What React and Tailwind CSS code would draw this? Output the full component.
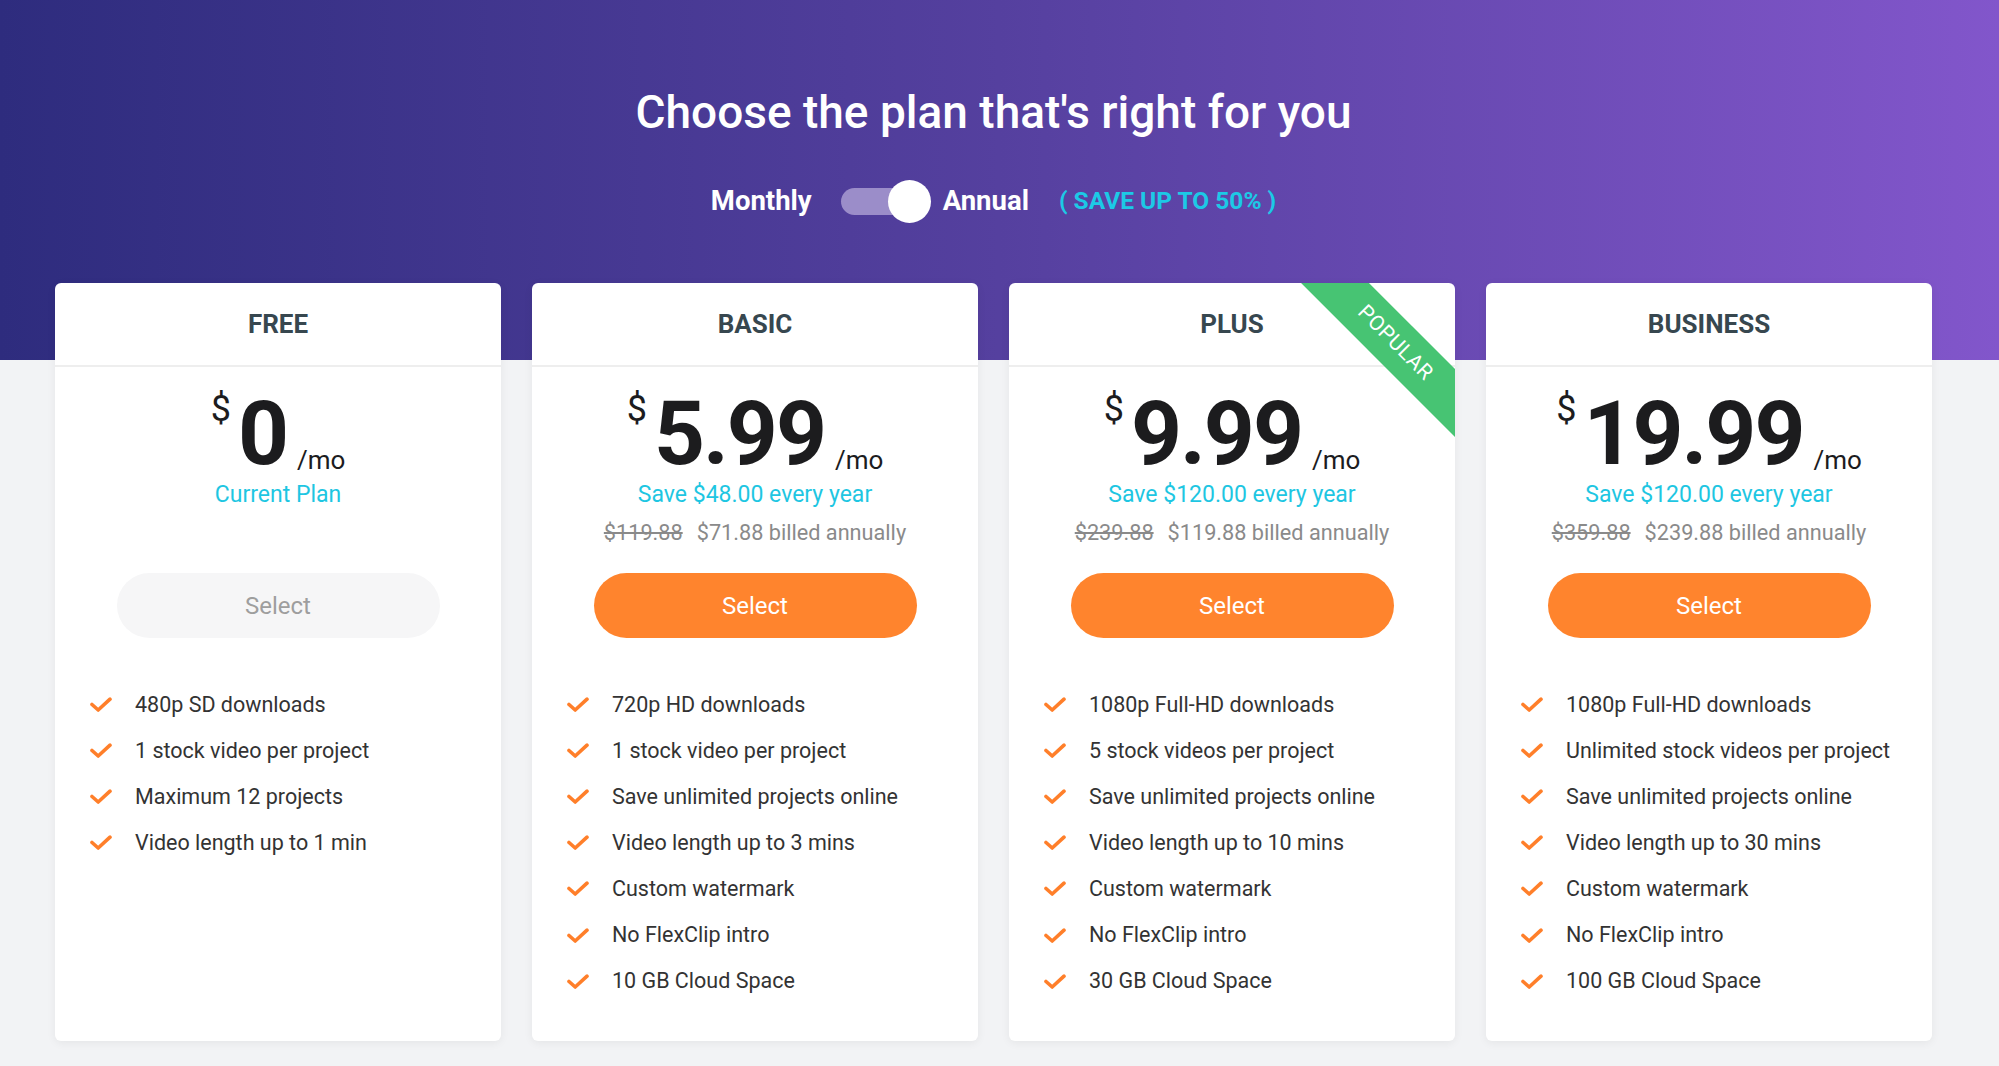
import React from "react";

const plans = [
  {
    name: "FREE",
    price: "0",
    sub: "Current Plan",
    old: null,
    billed: null,
    current: true,
    features: [
      "480p SD downloads",
      "1 stock video per project",
      "Maximum 12 projects",
      "Video length up to 1 min",
    ],
  },
  {
    name: "BASIC",
    price: "5.99",
    sub: "Save $48.00 every year",
    old: "$119.88",
    billed: "$71.88 billed annually",
    features: [
      "720p HD downloads",
      "1 stock video per project",
      "Save unlimited projects online",
      "Video length up to 3 mins",
      "Custom watermark",
      "No FlexClip intro",
      "10 GB Cloud Space",
    ],
  },
  {
    name: "PLUS",
    price: "9.99",
    sub: "Save $120.00 every year",
    old: "$239.88",
    billed: "$119.88 billed annually",
    popular: true,
    features: [
      "1080p Full-HD downloads",
      "5 stock videos per project",
      "Save unlimited projects online",
      "Video length up to 10 mins",
      "Custom watermark",
      "No FlexClip intro",
      "30 GB Cloud Space",
    ],
  },
  {
    name: "BUSINESS",
    price: "19.99",
    sub: "Save $120.00 every year",
    old: "$359.88",
    billed: "$239.88 billed annually",
    features: [
      "1080p Full-HD downloads",
      "Unlimited stock videos per project",
      "Save unlimited projects online",
      "Video length up to 30 mins",
      "Custom watermark",
      "No FlexClip intro",
      "100 GB Cloud Space",
    ],
  },
];

function Check() {
  return (
    <svg width="22" height="16" viewBox="0 0 22 16" className="shrink-0">
      <path
        d="M2 7.5 L8.2 13 L20 2.2"
        fill="none"
        stroke="#ff7f2a"
        strokeWidth="3.6"
        strokeLinecap="round"
        strokeLinejoin="round"
      />
    </svg>
  );
}

function Card({ plan }) {
  return (
    <div className="relative overflow-hidden rounded-[6px] bg-white shadow-[0_2px_10px_rgba(0,0,0,0.06)]">
      {plan.popular && (
        <div className="absolute left-[251px] top-[36px] flex h-[48px] w-[270px] rotate-45 items-center justify-center bg-[#47c473] text-[21px] tracking-[0.5px] text-white">
          POPULAR
        </div>
      )}
      <div className="flex h-[84px] items-center justify-center border-b-2 border-[#eeeeee] text-[26px] font-bold text-[#37474f]">
        {plan.name}
      </div>
      <div className="flex flex-col items-center pt-[22px]">
        <div className="flex h-[90px] items-baseline justify-center text-[#1c1c1e]">
          <span className="mr-[7px] self-start pt-[2px] text-[36px] leading-none">$</span>
          <span className="text-[89px] font-bold leading-none tracking-[-2px]">{plan.price}</span>
          <span className="ml-[10px] translate-y-[5px] text-[26px] leading-none">/mo</span>
        </div>
        <div className="h-[32px] text-[23px] leading-[32px] text-[#1ec6e2]">{plan.sub}</div>
        <div className="mt-[7px] h-[30px] text-[21.7px] leading-[30px] text-[#8a8a8a]">
          {plan.old && (
            <>
              <span className="line-through">{plan.old}</span>
              <span className="ml-[14px]">{plan.billed}</span>
            </>
          )}
        </div>
        <button
          className={
            plan.current
              ? "mt-[25px] h-[65px] w-[323px] rounded-full bg-[#f6f6f7] text-[24px] text-[#9e9e9e]"
              : "mt-[25px] h-[65px] w-[323px] rounded-full bg-[#ff842d] text-[24px] text-white"
          }
        >
          Select
        </button>
      </div>
      <ul className="pb-[36px] pl-[35px] pt-[44px]">
        {plan.features.map((f) => (
          <li key={f} className="flex h-[46.1px] items-center gap-[23px] text-[21.5px] text-[#333333]">
            <Check />
            <span>{f}</span>
          </li>
        ))}
      </ul>
    </div>
  );
}

export default function App() {
  return (
    <div className="min-h-[1066px] w-full bg-[#f2f3f5] font-['Roboto','Liberation_Sans',sans-serif]">
      <div className="h-[360px] w-full bg-gradient-to-r from-[#2e2c7e] via-[#55409f] to-[#8256cb]">
        <div className="flex w-[1987px] flex-col items-center pt-[84px]">
          <h1 className="text-[46px] font-medium leading-[56px] text-white">
            Choose the plan that's right for you
          </h1>
          <div className="mt-[39px] flex h-[44px] items-center">
            <span className="text-[27.5px] font-bold text-white">Monthly</span>
            <div className="relative ml-[29px] h-[43px] w-[90px]">
              <div className="absolute left-0 top-[8px] h-[27px] w-[84px] rounded-full bg-[#9b8dc9]" />
              <div className="absolute right-0 top-0 h-[43px] w-[43px] rounded-full bg-white" />
            </div>
            <span className="ml-[12px] text-[27.5px] font-bold text-white">Annual</span>
            <span className="ml-[30px] text-[24.5px] font-bold text-[#1cc9e6]">( SAVE UP TO 50% )</span>
          </div>
        </div>
      </div>
      <div className="-mt-[77px] w-[1987px] px-[55px]">
        <div className="grid grid-cols-4 gap-[31px]">
          {plans.map((p) => (
            <Card key={p.name} plan={p} />
          ))}
        </div>
      </div>
    </div>
  );
}
